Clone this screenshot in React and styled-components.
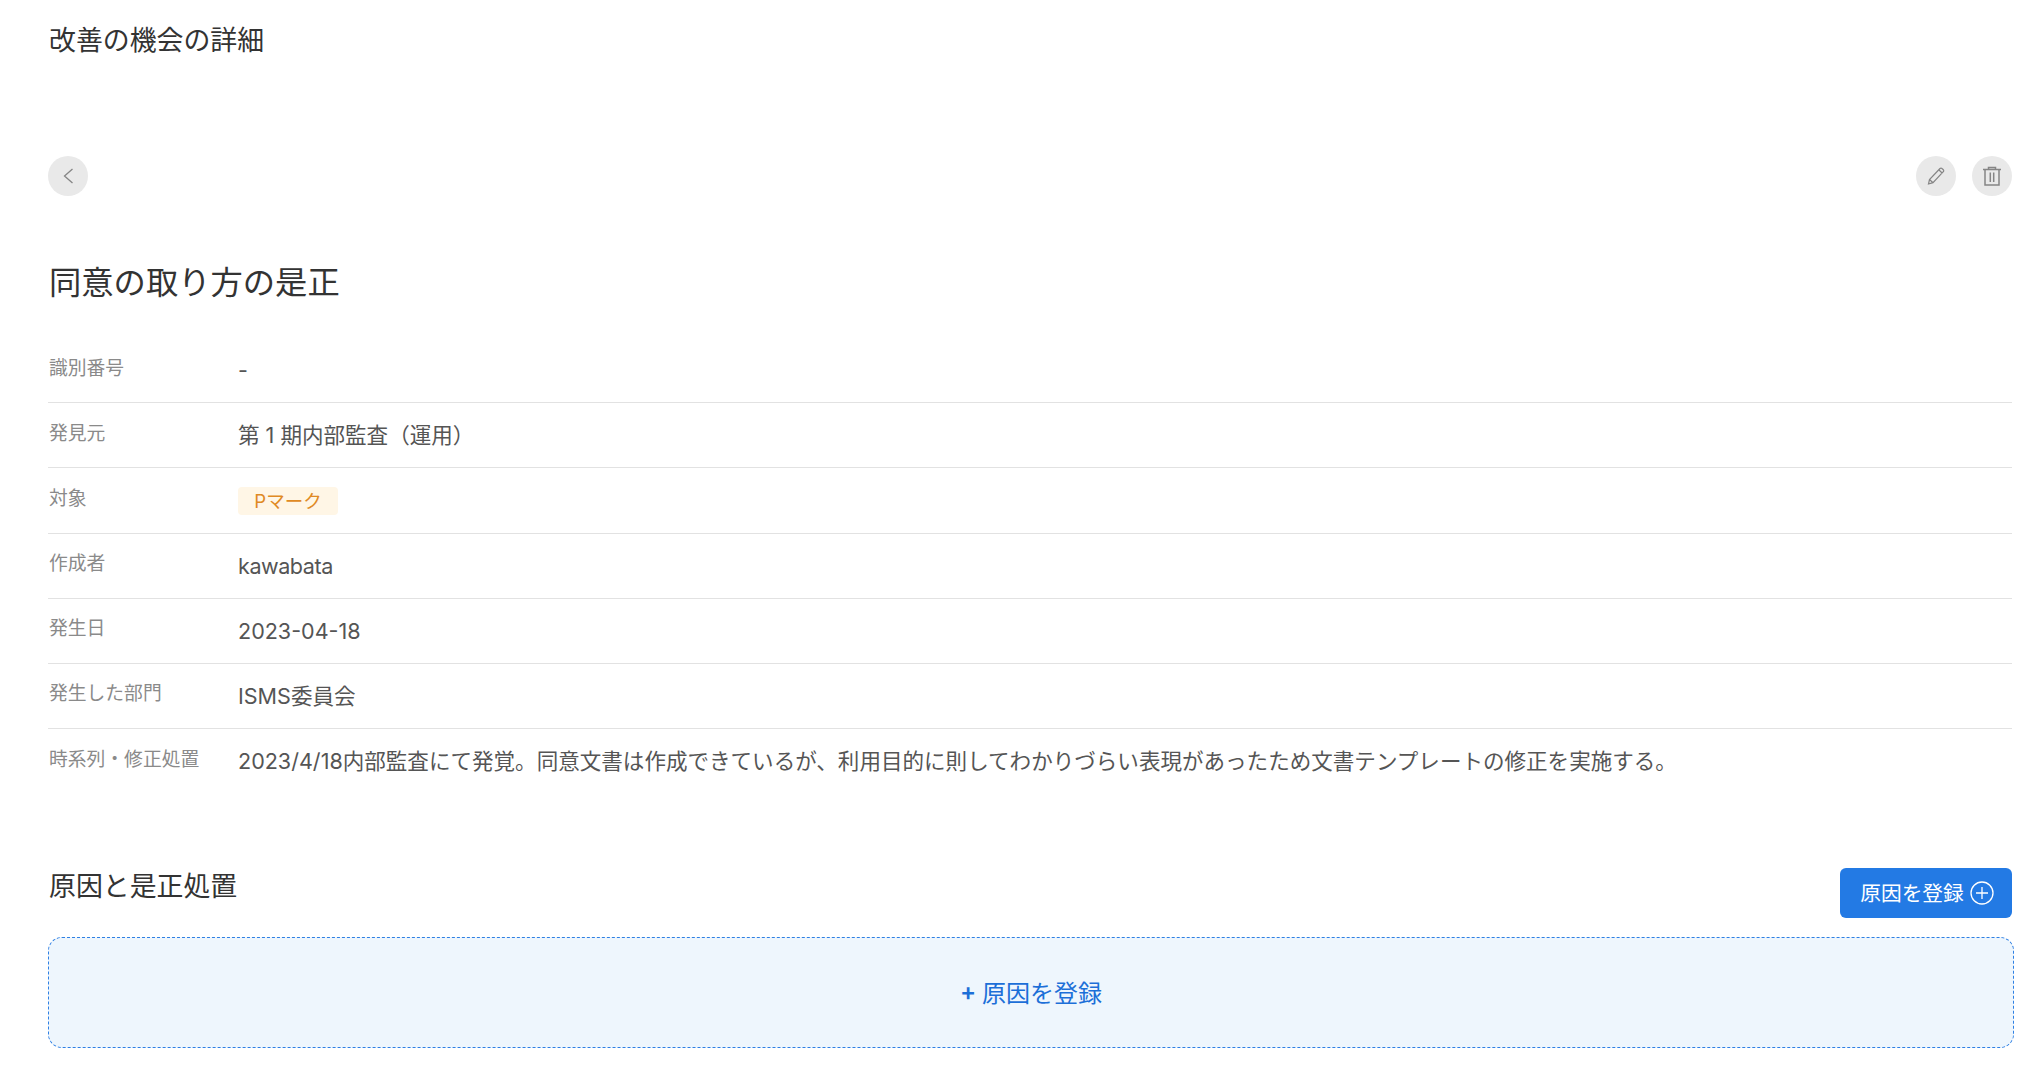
import React from "react";
import styled, { createGlobalStyle } from "styled-components";

const Global = createGlobalStyle`
  html, body { margin: 0; padding: 0; background: #fff; }
  body { font-family: Inter, "Noto Sans CJK JP", sans-serif; color: #333; }
`;
const Page = styled.div`
  width: 2040px; height: 1068px; box-sizing: border-box; overflow: hidden;
  padding: 20px 28px 0 48px; display: flex; flex-direction: column;
`;
const PageTitle = styled.h1`
  margin: 0; font-size: 26.9px; line-height: 41px; font-weight: 400; color: #333; text-indent: 1px;
`;
const Toolbar = styled.div`
  margin-top: 95px; display: flex; justify-content: space-between; align-items: center;
`;
const ActionGroup = styled.div`display: flex; gap: 16px;`;
const RoundButton = styled.button`
  width: 40px; height: 40px; border-radius: 50%; border: 0; padding: 0;
  background: #e9e9e9; color: #858585; display: flex; align-items: center; justify-content: center;
`;
const Heading = styled.h2`
  margin: 63px 0 0; font-size: 32.3px; line-height: 47px; font-weight: 400; color: #333; text-indent: 1px;
`;
const Details = styled.dl`margin: 32px 0 0; display: flex; flex-direction: column;`;
const Row = styled.div`
  display: flex; align-items: flex-start; height: 65.2px; box-sizing: border-box;
  border-bottom: ${p => (p.$last ? "0" : "1px solid #e2e2e2")};
`;
const Label = styled.dt`
  width: 190px; flex: none; padding-top: 16.5px; font-size: 18.8px; line-height: 28px; color: #8a8a8a; text-indent: 1px;
`;
const Value = styled.dd`
  margin: 0; padding-top: 17px; font-size: 21.55px; line-height: 30px; color: #555;
  letter-spacing: ${p => p.$tracking || "normal"};
`;
const Tag = styled.span`
  display: inline-block; height: 28px; width: 100px; box-sizing: border-box; margin-top: 2px;
  text-align: center; font-size: 18.5px; line-height: 28px; color: #e08a24;
  background: #fff6e6; border-radius: 4px; vertical-align: top;
`;
const SectionHeader = styled.div`
  margin-top: 71px; display: flex; justify-content: space-between; align-items: flex-start;
`;
const SectionTitle = styled.h3`
  margin: 0; font-size: 26.9px; line-height: 42px; font-weight: 400; color: #333; text-indent: 1px;
`;
const PrimaryButton = styled.button`
  width: 172px; height: 50px; margin-top: 3px; border: 0; border-radius: 6px; background: #237ae4; color: #fff;
  font: inherit; font-size: 20.7px; display: flex; align-items: center; justify-content: center; gap: 6px; padding: 0 0 2px 2px;
  svg { margin-top: 2px; }
`;
const DropZone = styled.div`
  margin: 19px -2px 0 0; height: 111px; box-sizing: border-box; border: 1.5px dashed #2f80e4; border-radius: 14px;
  padding-bottom: 2px; background: #eef6fd; color: #1c6fd8; font-size: 24px;
  display: flex; align-items: center; justify-content: center;
`;
const Plus = styled.span`font-weight: 600; margin-right: 6px;`;

const rows = [
  ["識別番号", "-"],
  ["発見元", "第 1 期内部監査（運用）"],
  ["対象", <Tag>Pマーク</Tag>],
  ["作成者", "kawabata", "-0.45px"],
  ["発生日", "2023-04-18"],
  ["発生した部門", "ISMS委員会"],
  ["時系列・修正処置", "2023/4/18内部監査にて発覚。同意文書は作成できているが、利用目的に則してわかりづらい表現があったため文書テンプレートの修正を実施する。"],
];

export default function App() {
  return (
    <Page>
      <Global />
      <PageTitle>改善の機会の詳細</PageTitle>
      <Toolbar>
        <RoundButton aria-label="back">
          <svg width="20" height="20" viewBox="0 0 20 20" fill="none" stroke="currentColor" strokeWidth="1.3"><path d="M14.5 3L6.5 10l8 7" /></svg>
        </RoundButton>
        <ActionGroup>
          <RoundButton aria-label="edit">
            <svg width="20" height="20" viewBox="0 0 20 20" fill="none" stroke="currentColor" strokeWidth="1.2"><path d="M2.5 18l1-4.5L14 2.5a1.4 1.4 0 0 1 2 0l1.3 1.2a1.4 1.4 0 0 1 0 2L7 16.7zM3.5 13.5L7 16.7M12.8 3.8l3.3 3.2" /></svg>
          </RoundButton>
          <RoundButton aria-label="delete">
            <svg width="20" height="20" viewBox="0 0 20 20" fill="none" stroke="currentColor" strokeWidth="1.5"><path d="M1 3.5h18M6.5 3.5V1.5h7v2M3 3.5V19h14V3.5M8.3 6.5V16M11.7 6.5V16" /></svg>
          </RoundButton>
        </ActionGroup>
      </Toolbar>
      <Heading>同意の取り方の是正</Heading>
      <Details>
        {rows.map(([k, v, tracking], i) => (
          <Row key={k} $last={i === rows.length - 1}>
            <Label>{k}</Label>
            <Value $tracking={tracking}>{v}</Value>
          </Row>
        ))}
      </Details>
      <SectionHeader>
        <SectionTitle>原因と是正処置</SectionTitle>
        <PrimaryButton>
          原因を登録
          <svg width="24" height="24" viewBox="0 0 24 24" fill="none" stroke="currentColor" strokeWidth="1.3"><circle cx="12" cy="12" r="11" /><path d="M12 6v12M6 12h12" /></svg>
        </PrimaryButton>
      </SectionHeader>
      <DropZone><Plus>+</Plus>原因を登録</DropZone>
    </Page>
  );
}
